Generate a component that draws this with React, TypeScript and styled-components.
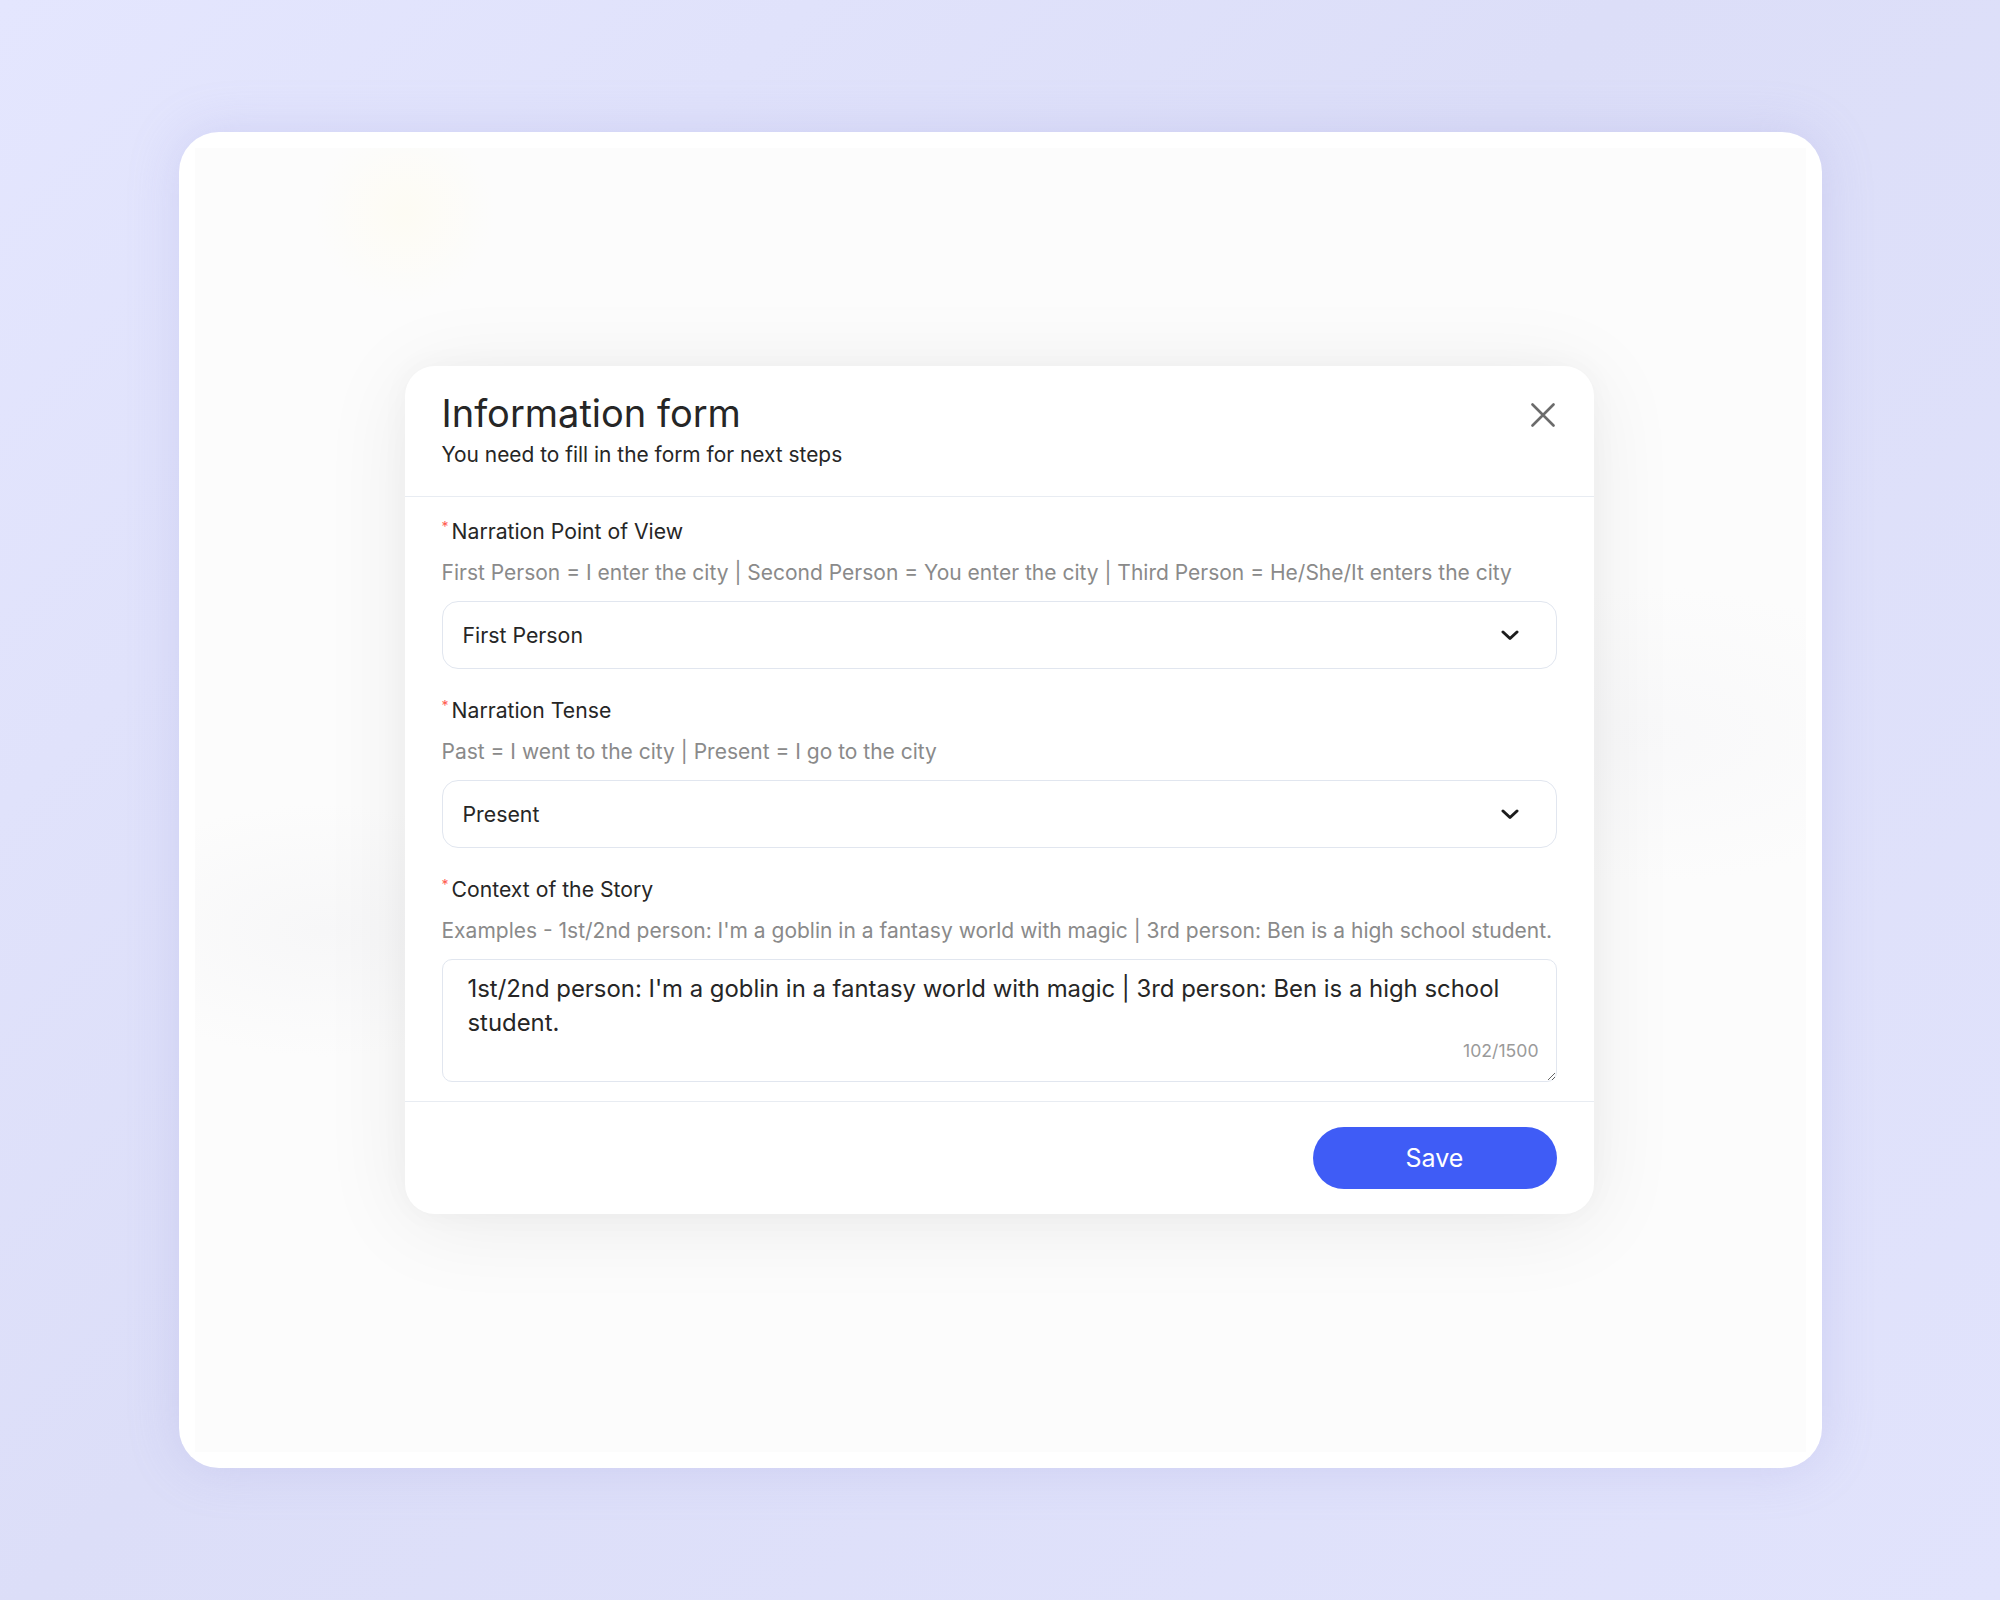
import styled, { createGlobalStyle } from "styled-components";

const GlobalStyle = createGlobalStyle`
  * {
    box-sizing: border-box;
  }
  body {
    margin: 0;
    font-family: Inter, "Noto Sans", sans-serif;
    background: #e2e4fc;
  }
`;

const Page = styled.div`
  width: 2000px;
  height: 1600px;
  display: flex;
  align-items: center;
  justify-content: center;
  background: linear-gradient(135deg, #e4e6fe 0%, #dcdef8 45%, #e1e3fc 100%);
`;

const Frame = styled.div`
  width: 1643px;
  height: 1336px;
  padding: 16px;
  background: #ffffff;
  border-radius: 40px;
  box-shadow: 0 0 50px rgba(150, 152, 220, 0.25);
  display: flex;
`;

const Backdrop = styled.div`
  flex: 1;
  display: flex;
  justify-content: center;
  align-items: flex-start;
  padding-top: 218px;
  background:
    radial-gradient(circle at 13% 5%, rgba(255, 251, 235, 0.5) 0, rgba(255, 251, 235, 0) 90px),
    radial-gradient(ellipse at 8% 60%, rgba(242, 242, 244, 0.5) 0, rgba(242, 242, 244, 0) 240px),
    radial-gradient(ellipse at 90% 45%, rgba(245, 245, 247, 0.5) 0, rgba(245, 245, 247, 0) 300px),
    #fcfcfc;
`;

const Modal = styled.div`
  width: 1189px;
  margin-left: -2px;
  background: #ffffff;
  border-radius: 30px;
  box-shadow: 0 10px 90px rgba(0, 0, 0, 0.07), 0 0 30px rgba(0, 0, 0, 0.03);
  display: flex;
  flex-direction: column;
`;

const Header = styled.div`
  display: flex;
  justify-content: space-between;
  align-items: flex-start;
  padding: 26px 37px 27px;
  border-bottom: 1px solid #e8ecf2;
`;

const Title = styled.h2`
  margin: 0;
  font-size: 38px;
  line-height: 42px;
  font-weight: 400;
  color: #262626;
`;

const Subtitle = styled.p`
  margin: 7px 0 0;
  font-size: 20.9px;
  line-height: 28px;
  color: #262626;
`;

const CloseButton = styled.button`
  margin-top: 11px;
  margin-right: 2px;
  width: 24px;
  height: 24px;
  padding: 0;
  border: none;
  background: none;
  cursor: pointer;
  display: flex;
  align-items: center;
  justify-content: center;
`;

const Body = styled.div`
  display: flex;
  flex-direction: column;
  gap: 27px;
  padding: 20px 37px 19px;
  border-bottom: 1px solid #e8ecf2;
`;

const Field = styled.div`
  display: flex;
  flex-direction: column;
`;

const Label = styled.label`
  display: flex;
  align-items: flex-start;
  font-size: 21.2px;
  line-height: 28px;
  color: #262626;
`;

const Star = styled.span`
  color: #ff5a4f;
  font-size: 14px;
  line-height: 20px;
  margin-right: 3px;
`;

const Hint = styled.div`
  margin-top: 15px;
  font-size: 21px;
  line-height: 26px;
  color: #8a8a8a;
  white-space: nowrap;
`;

const Select = styled.div`
  margin-top: 15px;
  height: 68px;
  border: 1px solid #e1e6ef;
  border-radius: 16px;
  padding: 0 37px 0 20px;
  display: flex;
  align-items: center;
  justify-content: space-between;
  font-size: 21.3px;
  color: #262626;
  background: #ffffff;
`;

const AreaWrap = styled.div`
  margin-top: 15px;
  position: relative;
  display: flex;
`;

const Area = styled.textarea`
  flex: 1;
  height: 123px;
  border: 1px solid #e1e6ef;
  border-radius: 10px;
  padding: 12px 25px;
  font-family: Inter, "Noto Sans", sans-serif;
  font-size: 23.9px;
  line-height: 34px;
  color: #262626;
  resize: vertical;
  outline: none;
`;

const Count = styled.span`
  position: absolute;
  right: 18px;
  bottom: 21px;
  font-size: 17.6px;
  line-height: 20px;
  color: #9a9a9a;
`;

const Footer = styled.div`
  display: flex;
  justify-content: flex-end;
  padding: 25px 37px;
`;

const SaveButton = styled.button`
  width: 244px;
  height: 62px;
  border: none;
  border-radius: 31px;
  background: #3f5cf6;
  color: #ffffff;
  font-family: Inter, "Noto Sans", sans-serif;
  font-size: 25px;
  cursor: pointer;
`;

function Chevron() {
  return (
    <svg width="18" height="12" viewBox="0 0 18 12" fill="none">
      <path d="M2 3l7 6.5L16 3" stroke="#1c1c1c" strokeWidth="3" strokeLinecap="round" strokeLinejoin="round" />
    </svg>
  );
}

function CloseIcon() {
  return (
    <svg width="24" height="24" viewBox="0 0 24 24" fill="none">
      <path d="M1.5 1.5l21 21M22.5 1.5l-21 21" stroke="#6b6b6b" strokeWidth="2.6" strokeLinecap="round" />
    </svg>
  );
}

const story =
  "1st/2nd person: I'm a goblin in a fantasy world with magic | 3rd person: Ben is a high school student.";

export default function App() {
  return (
    <>
      <GlobalStyle />
      <Page>
        <Frame>
          <Backdrop>
            <Modal>
              <Header>
                <div>
                  <Title>Information form</Title>
                  <Subtitle>You need to fill in the form for next steps</Subtitle>
                </div>
                <CloseButton aria-label="Close">
                  <CloseIcon />
                </CloseButton>
              </Header>
              <Body>
                <Field>
                  <Label>
                    <Star>*</Star>Narration Point of View
                  </Label>
                  <Hint>
                    First Person = I enter the city | Second Person = You enter the city | Third Person = He/She/It enters the city
                  </Hint>
                  <Select>
                    First Person
                    <Chevron />
                  </Select>
                </Field>
                <Field>
                  <Label>
                    <Star>*</Star>Narration Tense
                  </Label>
                  <Hint>Past = I went to the city | Present = I go to the city</Hint>
                  <Select>
                    Present
                    <Chevron />
                  </Select>
                </Field>
                <Field>
                  <Label>
                    <Star>*</Star>Context of the Story
                  </Label>
                  <Hint>
                    Examples - 1st/2nd person: I'm a goblin in a fantasy world with magic | 3rd person: Ben is a high school student.
                  </Hint>
                  <AreaWrap>
                    <Area defaultValue={story} />
                    <Count>{story.length}/1500</Count>
                  </AreaWrap>
                </Field>
              </Body>
              <Footer>
                <SaveButton>Save</SaveButton>
              </Footer>
            </Modal>
          </Backdrop>
        </Frame>
      </Page>
    </>
  );
}
